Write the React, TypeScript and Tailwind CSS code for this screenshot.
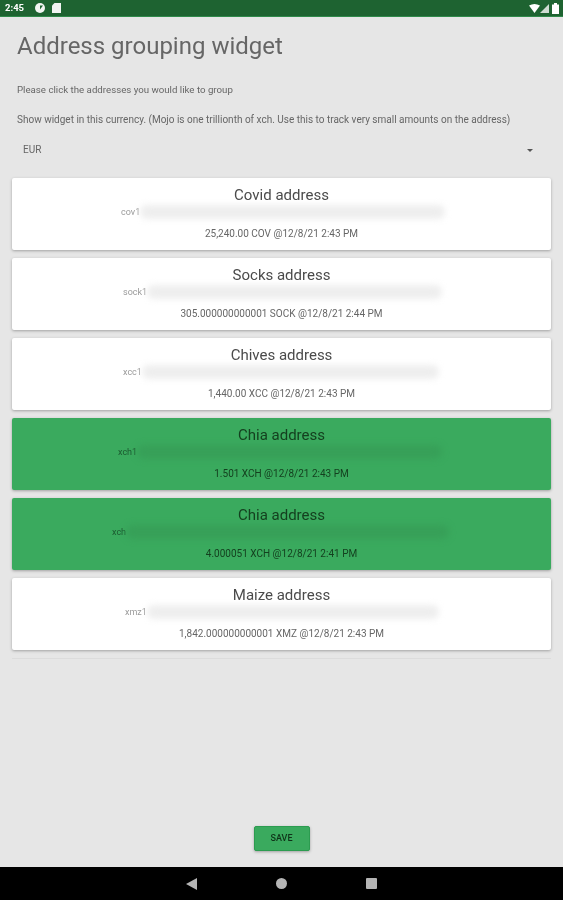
const cards = [
  { title: 'Covid address', prefix: 'cov1', bar: 'w-[305px]', pl: 'pl-[109px]', value: '25,240.00 COV @12/8/21 2:43 PM', selected: false },
  { title: 'Socks address', prefix: 'sock1', bar: 'w-[295px]', pl: 'pl-[111px]', value: '305.000000000001 SOCK @12/8/21 2:44 PM', selected: false },
  { title: 'Chives address', prefix: 'xcc1', bar: 'w-[297px]', pl: 'pl-[111px]', value: '1,440.00 XCC @12/8/21 2:43 PM', selected: false },
  { title: 'Chia address', prefix: 'xch1', bar: 'w-[305px]', pl: 'pl-[106px]', value: '1.501 XCH @12/8/21 2:43 PM', selected: true },
  { title: 'Chia address', prefix: 'xch', bar: 'w-[323px]', pl: 'pl-[100px]', value: '4.000051 XCH @12/8/21 2:41 PM', selected: true },
  { title: 'Maize address', prefix: 'xmz1', bar: 'w-[292px]', pl: 'pl-[113px]', value: '1,842.000000000001 XMZ @12/8/21 2:43 PM', selected: false },
];

function StatusBar() {
  return (
    <div className="flex h-[17px] items-center justify-between border-b border-[#2f8a4a] bg-[#1e6331] pl-[5px] pr-[4px] text-white">
      <div className="flex items-center">
        <span className="w-[30px] text-[9.5px] font-bold leading-none">2:45</span>
        <svg width="10" height="10" viewBox="0 0 10 10">
          <circle cx="5" cy="5" r="5" fill="#f1f5f2" />
          <path d="M5 2.5H8L5 6.5z" fill="#1e6331" />
        </svg>
        <svg width="9" height="10" viewBox="0 0 9 10" className="ml-[7px]">
          <path d="M2.5 0H9V10H0V2.5z" fill="#f1f5f2" />
        </svg>
      </div>
      <div className="flex items-center">
        <svg width="11" height="9" viewBox="0 0 11 9">
          <path d="M0 1.5Q5.5 -1.5 11 1.5L5.5 9z" fill="#ffffff" />
        </svg>
        <svg width="9" height="9" viewBox="0 0 9 9">
          <path d="M9 0V9H0z" fill="#cfdcd2" />
        </svg>
        <svg width="7" height="11" viewBox="0 0 7 11" className="ml-[3px]">
          <path d="M0 1.5H2V0H5V1.5H7V11H0z" fill="#ffffff" />
        </svg>
      </div>
    </div>
  );
}

function AddressCard({ card }: { card: (typeof cards)[number] }) {
  return (
    <div
      className={`flex h-[72px] flex-col items-center rounded-[2px] pt-[7px] shadow-[0_1px_3px_rgba(0,0,0,0.3)] ${
        card.selected ? 'bg-[#3aaa5e]' : 'bg-white'
      }`}
    >
      <div className={`text-[15px] leading-[20px] ${card.selected ? 'text-[#14401f]' : 'text-[#4a4a4a]'}`}>{card.title}</div>
      <div className={`flex h-[14px] w-full items-center ${card.pl}`}>
        <span className={`text-[9px] leading-none ${card.selected ? 'text-[#1c5a30]' : 'text-[#9a9a9a]'}`}>{card.prefix}</span>
        <div className={`h-[14px] shrink-0 rounded-full blur-[3px] ${card.bar} ${card.selected ? 'bg-[#37a058]' : 'bg-[#eeeeee]'}`} />
      </div>
      <div className={`mt-[9px] text-[10px] leading-[12px] ${card.selected ? 'text-[#14401f]' : 'text-[#666666]'}`}>{card.value}</div>
    </div>
  );
}

export default function App() {
  return (
    <div className="flex h-[900px] w-[563px] flex-col overflow-hidden bg-[#e6e6e6] font-['Roboto',sans-serif] blur-[0.4px]">
      <StatusBar />
      <div className="flex flex-1 flex-col">
        <h1 className="mt-[15px] pl-[17px] text-[24px] font-normal leading-[28px] text-[#666666]">Address grouping widget</h1>
        <p className="mt-[24px] pl-[17px] text-[9.7px] leading-[12px] text-[#666666]">Please click the addresses you would like to group</p>
        <p className="mt-[18px] pl-[17px] text-[10px] leading-[12px] text-[#666666]">
          Show widget in this currency. (Mojo is one trillionth of xch. Use this to track very small amounts on the address)
        </p>
        <div className="mt-[17px] flex items-center justify-between pl-[23px] pr-[30px]">
          <span className="text-[10px] leading-[14px] text-[#666666]">EUR</span>
          <div className="h-0 w-0 border-x-[3px] border-t-[3px] border-x-transparent border-t-[#555555]" />
        </div>
        <div className="mt-[21px] flex flex-col gap-[8px] px-[12px]">
          {cards.map((card, i) => (
            <AddressCard key={i} card={card} />
          ))}
        </div>
        <div className="mx-[12px] mt-[8px] h-[1px] bg-[#dcdcdc]" />
        <div className="mt-auto flex justify-center pb-[16px]">
          <button className="h-[25px] w-[56px] rounded-[2px] border border-[#2c9c50] bg-[#3aaa5e] text-[9px] font-medium leading-none text-[#0f3318] shadow-[0_1px_3px_rgba(0,0,0,0.3)]">
            SAVE
          </button>
        </div>
      </div>
      <div className="flex h-[33px] items-center justify-center gap-[79px] bg-black">
        <svg width="11" height="12" viewBox="0 0 11 12">
          <path d="M11 0V12L0 6z" fill="#b5b5b5" />
        </svg>
        <div className="h-[11px] w-[11px] rounded-full bg-[#b5b5b5]" />
        <div className="h-[11px] w-[11px] rounded-[1px] bg-[#b5b5b5]" />
      </div>
    </div>
  );
}
